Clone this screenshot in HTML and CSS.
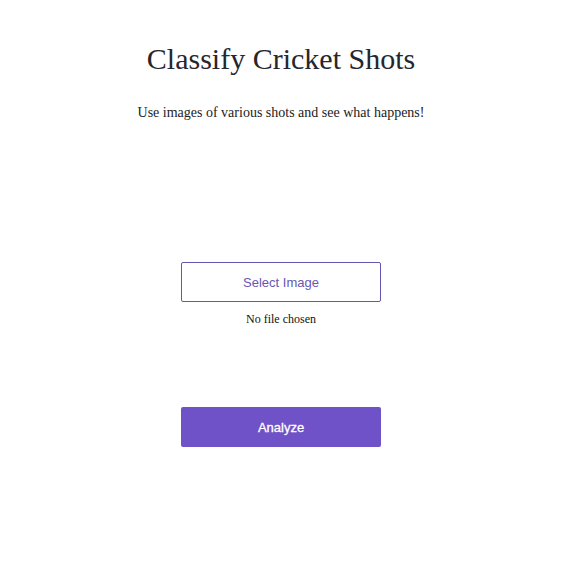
FILE: index.html
```html
<!DOCTYPE html>
<html>
<head>
<meta charset="utf-8">
<link rel="stylesheet" href="styles.css">
</head>
<body>
<main class="page">
  <h1 class="title">Classify Cricket Shots</h1>
  <p class="subtitle">Use images of various shots and see what happens!</p>
  <div class="upload">
    <button class="select-btn" type="button">Select Image</button>
    <span class="file-name">No file chosen</span>
  </div>
  <button class="analyze-btn" type="button">Analyze</button>
</main>
</body>
</html>
```
FILE: styles.css
```css
html, body {
  margin: 0;
  padding: 0;
  background: #ffffff;
}
.page {
  width: 562px;
  display: flex;
  flex-direction: column;
  align-items: center;
  font-family: "Liberation Serif", "Times New Roman", serif;
  color: #222;
}
.title {
  margin: 42px 0 0;
  font-size: 30px;
  font-weight: normal;
  line-height: 34px;
  color: #26262e;
}
.subtitle {
  margin: 29px 0 0;
  font-size: 14px;
  line-height: 16px;
}
.upload {
  margin-top: 141px;
  display: flex;
  flex-direction: column;
  align-items: center;
  gap: 10px;
}
.select-btn {
  width: 200px;
  height: 40px;
  border: 1px solid #6457b3;
  border-radius: 2px;
  background: #fff;
  color: #6757b3;
  font-family: "Liberation Sans", Arial, sans-serif;
  font-size: 13px;
}
.file-name {
  font-size: 12px;
  line-height: 14px;
  color: #111;
}
.analyze-btn {
  margin-top: 81px;
  width: 200px;
  height: 40px;
  border: none;
  border-radius: 2px;
  background: #7052c8;
  color: #fff;
  font-family: "Liberation Sans", Arial, sans-serif;
  font-size: 13px;
  -webkit-text-stroke: 0.3px #fff;
}
```
